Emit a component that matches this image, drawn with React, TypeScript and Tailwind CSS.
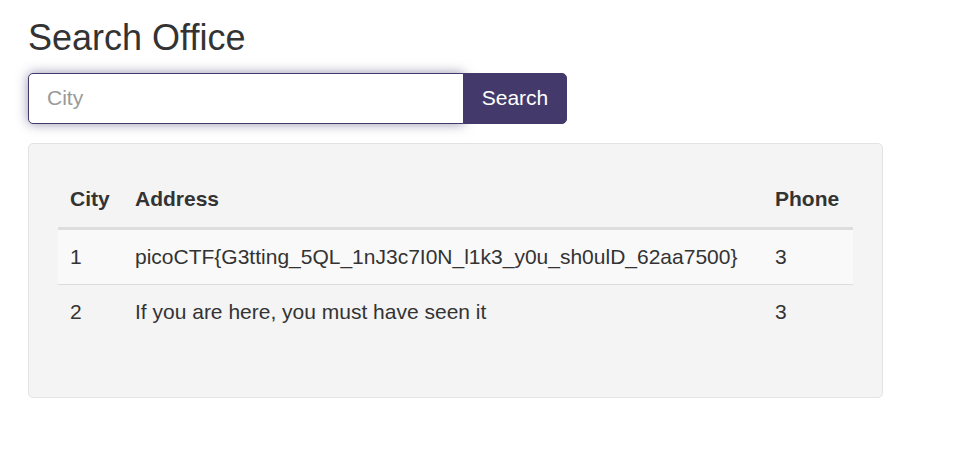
import { useState } from 'react';

const ROWS = [
  { city: '1', address: 'picoCTF{G3tting_5QL_1nJ3c7I0N_l1k3_y0u_sh0ulD_62aa7500}', phone: '3' },
  { city: '2', address: 'If you are here, you must have seen it', phone: '3' },
];

export default function App() {
  const [city, setCity] = useState('');

  return (
    <div className="min-h-screen bg-white px-[28px] pt-[18px] text-[#333] font-['Liberation_Sans',Arial,sans-serif] text-[21px] leading-[30px]">
      <h3 className="text-[36px] leading-[39.6px] font-normal mb-[15px]">Search Office</h3>

      {/* search bar */}
      <div className="flex w-[539px]">
        <input
          autoFocus
          value={city}
          onChange={(e) => setCity(e.target.value)}
          placeholder="City"
          className="w-[436px] h-[51px] px-[18px] text-[21px] border border-[#433a6b] rounded-l-[5px] outline-none bg-white placeholder:text-[#999] shadow-[0_0_12px_rgba(67,58,107,0.55)] caret-[#333]"
        />
        <button className="h-[51px] flex-1 -ml-px bg-[#433a6b] text-white text-[21px] rounded-r-[5px] border border-[#433a6b]">
          Search
        </button>
      </div>

      {/* results well */}
      <div className="mt-[19px] w-[855px] bg-[#f4f4f4] border border-[#e3e3e3] rounded-[5px] px-[29px] pt-[28px] pb-[28px]">
        <table className="w-full mb-[30px] border-collapse text-left">
          <thead>
            <tr className="border-b-[3px] border-[#ddd]">
              <th className="w-[65px] p-[12px] pb-[13px] font-bold align-bottom">City</th>
              <th className="p-[12px] pb-[13px] font-bold align-bottom">Address</th>
              <th className="w-[90px] p-[12px] pb-[13px] font-bold align-bottom">Phone</th>
            </tr>
          </thead>
          <tbody>
            {ROWS.map((r, i) => (
              <tr
                key={i}
                className={i === 0 ? 'bg-[#f9f9f9] border-b border-[#ddd]' : ''}
              >
                <td className="p-[12px]">{r.city}</td>
                <td className="p-[12px]">{r.address}</td>
                <td className="p-[12px]">{r.phone}</td>
              </tr>
            ))}
          </tbody>
        </table>
      </div>
    </div>
  );
}
